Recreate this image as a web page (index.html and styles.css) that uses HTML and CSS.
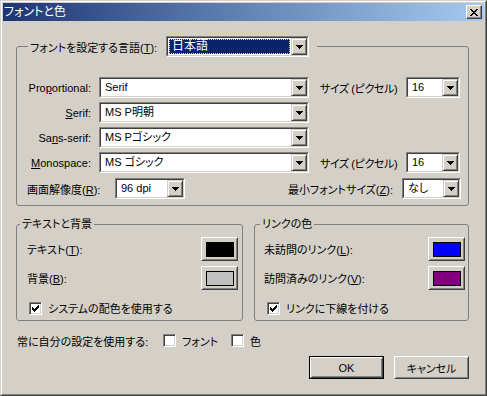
FILE: index.html
```html
<!DOCTYPE html>
<html lang="ja">
<head>
<meta charset="utf-8">
<title>フォントと色</title>
<link rel="stylesheet" href="styles.css">
</head>
<body>
<div class="win">
 <div class="win-in">
  <div class="titlebar">
   <span class="title">フォントと色</span>
   <span class="close"><svg width="8" height="7" shape-rendering="crispEdges"><path d="M0 0h2v1h-2zM6 0h2v1h-2zM1 1h2v1h-2zM5 1h2v1h-2zM2 2h4v1h-4zM3 3h2v1h-2zM2 4h4v1h-4zM1 5h2v1h-2zM5 5h2v1h-2zM0 6h2v1h-2zM6 6h2v1h-2z"/></svg></span>
  </div>
  <div class="body">
   <fieldset class="grp grp-main">
    <legend class="lg-main">
     <span class="lg-label">フォントを設定する言語(<u>T</u>):</span>
     <div class="combo w143">
      <div class="combo-in">
       <span class="cv sel"><span class="selbox">日本語</span></span>
       <span class="dd"><svg width="7" height="4" shape-rendering="crispEdges"><path d="M0 0h7v1h-1v1h-1v1h-1v1h-1v-1h-1v-1h-1v-1h-1z"/></svg></span>
      </div>
     </div>
    </legend>
    <div class="fontgrid">
     <span class="flabel">Pro<u>p</u>ortional:</span>
     <div class="combo w210"><div class="combo-in"><span class="cv">Serif</span><span class="dd"><svg width="7" height="4" shape-rendering="crispEdges"><path d="M0 0h7v1h-1v1h-1v1h-1v1h-1v-1h-1v-1h-1v-1h-1z"/></svg></span></div></div>
     <span class="slabel">サイズ (ピクセル)</span>
     <div class="combo w54"><div class="combo-in"><span class="cv">16</span><span class="dd"><svg width="7" height="4" shape-rendering="crispEdges"><path d="M0 0h7v1h-1v1h-1v1h-1v1h-1v-1h-1v-1h-1v-1h-1z"/></svg></span></div></div>

     <span class="flabel"><u>S</u>erif:</span>
     <div class="combo w210"><div class="combo-in"><span class="cv">MS P明朝</span><span class="dd"><svg width="7" height="4" shape-rendering="crispEdges"><path d="M0 0h7v1h-1v1h-1v1h-1v1h-1v-1h-1v-1h-1v-1h-1z"/></svg></span></div></div>
     <span class="empty"></span>
     <span class="empty"></span>

     <span class="flabel">Sa<u>n</u>s-serif:</span>
     <div class="combo w210"><div class="combo-in"><span class="cv">MS Pゴシック</span><span class="dd"><svg width="7" height="4" shape-rendering="crispEdges"><path d="M0 0h7v1h-1v1h-1v1h-1v1h-1v-1h-1v-1h-1v-1h-1z"/></svg></span></div></div>
     <span class="empty"></span>
     <span class="empty"></span>

     <span class="flabel"><u>M</u>onospace:</span>
     <div class="combo w210"><div class="combo-in"><span class="cv">MS ゴシック</span><span class="dd"><svg width="7" height="4" shape-rendering="crispEdges"><path d="M0 0h7v1h-1v1h-1v1h-1v1h-1v-1h-1v-1h-1v-1h-1z"/></svg></span></div></div>
     <span class="slabel">サイズ (ピクセル)</span>
     <div class="combo w54"><div class="combo-in"><span class="cv">16</span><span class="dd"><svg width="7" height="4" shape-rendering="crispEdges"><path d="M0 0h7v1h-1v1h-1v1h-1v1h-1v-1h-1v-1h-1v-1h-1z"/></svg></span></div></div>
    </div>
    <div class="dpirow">
     <span class="dpilabel">画面解像度(<u>R</u>):</span>
     <div class="combo w70"><div class="combo-in"><span class="cv">96 dpi</span><span class="dd"><svg width="7" height="4" shape-rendering="crispEdges"><path d="M0 0h7v1h-1v1h-1v1h-1v1h-1v-1h-1v-1h-1v-1h-1z"/></svg></span></div></div>
     <span class="spacer"></span>
     <span class="minlabel">最小フォントサイズ(<u>Z</u>):</span>
     <div class="combo w59"><div class="combo-in"><span class="cv">なし</span><span class="dd"><svg width="7" height="4" shape-rendering="crispEdges"><path d="M0 0h7v1h-1v1h-1v1h-1v1h-1v-1h-1v-1h-1v-1h-1z"/></svg></span></div></div>
    </div>
   </fieldset>

   <div class="grprow">
    <fieldset class="grp grp-left">
     <legend class="lg">テキストと背景</legend>
     <div class="crow first">
      <span class="clabel">テキスト(<u>T</u>):</span>
      <span class="cbtn"><span class="sw sw-black"></span></span>
     </div>
     <div class="crow">
      <span class="clabel">背景(<u>B</u>):</span>
      <span class="cbtn"><span class="sw sw-grey"></span></span>
     </div>
     <div class="chkrow">
      <span class="chk"><svg width="7" height="7" shape-rendering="crispEdges"><path d="M6 0h1v1h-1zM5 1h2v1h-2zM0 2h1v1h-1zM4 2h3v1h-3zM0 3h2v1h-2zM3 3h3v1h-3zM0 4h5v1h-5zM1 5h3v1h-3zM2 6h1v1h-1z"/></svg></span>
      <span class="chktext">システムの配色を使用する</span>
     </div>
    </fieldset>
    <fieldset class="grp grp-right">
     <legend class="lg">リンクの色</legend>
     <div class="crow first">
      <span class="clabel">未訪問のリンク(<u>L</u>):</span>
      <span class="cbtn"><span class="sw sw-blue"></span></span>
     </div>
     <div class="crow">
      <span class="clabel">訪問済みのリンク(<u>V</u>):</span>
      <span class="cbtn"><span class="sw sw-purple"></span></span>
     </div>
     <div class="chkrow">
      <span class="chk"><svg width="7" height="7" shape-rendering="crispEdges"><path d="M6 0h1v1h-1zM5 1h2v1h-2zM0 2h1v1h-1zM4 2h3v1h-3zM0 3h2v1h-2zM3 3h3v1h-3zM0 4h5v1h-5zM1 5h3v1h-3zM2 6h1v1h-1z"/></svg></span>
      <span class="chktext">リンクに下線を付ける</span>
     </div>
    </fieldset>
   </div>

   <div class="always">
    <span class="alwayslabel">常に自分の設定を使用する:</span>
    <span class="chk"></span>
    <span class="chktext opt1">フォント</span>
    <span class="chk"></span>
    <span class="chktext">色</span>
   </div>

   <div class="btns">
    <span class="btn btn-default"><span class="btn-in">OK</span></span>
    <span class="btn"><span class="btn-in">キャンセル</span></span>
   </div>
  </div>
 </div>
</div>
</body>
</html>
```

FILE: styles.css
```css
* { box-sizing: border-box; }
html, body { margin: 0; padding: 0; background: #d4d0c8; }
body {
  font-family: "Liberation Sans", "Noto Sans CJK JP", sans-serif;
  font-size: 11px;
  font-feature-settings: "palt" 1;
  color: #000;
  width: 487px;
  height: 396px;
  overflow: hidden;
}
u { text-decoration: underline; text-underline-offset: 1px; }

.win {
  width: 487px;
  height: 396px;
  background: #d4d0c8;
  border: 1px solid;
  border-color: #d4d0c8 #404040 #404040 #d4d0c8;
}
.win-in {
  height: 100%;
  border: 1px solid;
  border-color: #fff #808080 #808080 #fff;
  padding: 1px;
}

.titlebar {
  height: 18px;
  display: flex;
  align-items: center;
  justify-content: space-between;
  padding: 0 2px 0 1px;
  background: linear-gradient(to right, #1c3573 0%, #5574a8 40%, #a6caf0 100%);
}
.title {
  color: #fff;
  font-size: 12px;
  line-height: 18px;
}
.close {
  width: 16px;
  height: 14px;
  display: flex;
  align-items: center;
  justify-content: center;
  background: #d4d0c8;
  border: 1px solid;
  border-color: #fff #404040 #404040 #fff;
  box-shadow: inset -1px -1px #808080;
}

.body {
  padding: 15px 15px 0 13px;
}

/* group boxes */
.grp {
  margin: 0;
  border: 1px solid #808080;
  border-radius: 3px;
  min-width: 0;
}
.grp-main {
  width: 453px;
  padding: 20px 7px 6px 11px;
}
.lg-main {
  display: flex;
  align-items: center;
  padding: 0 8px 0 2px;
  height: 21px;
}
.lg-label {
  width: 136px;
  white-space: nowrap;
}

/* combos */
.combo {
  height: 21px;
  border: 1px solid;
  border-color: #808080 #fff #fff #808080;
  flex: none;
}
.combo-in {
  height: 100%;
  display: flex;
  border: 1px solid;
  border-color: #404040 #d4d0c8 #d4d0c8 #404040;
  background: #fff;
}
.w143 { width: 143px; }
.w210 { width: 210px; }
.w54 { width: 54px; }
.w70 { width: 70px; }
.w59 { width: 59px; }
.cv {
  flex: 1;
  min-width: 0;
  padding-left: 4px;
  line-height: 17px;
  white-space: nowrap;
  overflow: hidden;
}
.cv.sel {
  padding: 1px;
  display: flex;
}
.selbox {
  flex: 1;
  background: #0a246a;
  color: #fff;
  border: 1px dotted #e8dc9c;
  line-height: 13px;
  padding-left: 2px;
  font-size: 12px;
}
.dd {
  width: 16px;
  height: 17px;
  flex: none;
  display: flex;
  align-items: center;
  justify-content: center;
  background: #d4d0c8;
  border: 1px solid;
  border-color: #d4d0c8 #404040 #404040 #d4d0c8;
  box-shadow: inset 1px 1px #fff, inset -1px -1px #808080;
}

/* font grid */
.fontgrid {
  display: grid;
  grid-template-columns: 63px 210px 81px 54px;
  column-gap: 8px;
  row-gap: 4px;
  align-items: center;
}
.flabel {
  text-align: right;
  white-space: nowrap;
}
.slabel {
  white-space: nowrap;
  margin-left: 3px;
  letter-spacing: -0.4px;
}
.empty { height: 21px; }

.dpirow {
  display: flex;
  align-items: center;
  margin-top: 5px;
  margin-left: -1px;
}
.dpilabel {
  width: 88px;
  white-space: nowrap;
}
.spacer { flex: 1; }
.minlabel {
  white-space: nowrap;
  margin-right: 9px;
}

/* colour groups */
.grprow {
  display: flex;
  gap: 11px;
  margin-top: 11px;
  width: 453px;
}
.grp-left {
  width: 227px;
  padding: 0 4px 4px 3px;
}
.grp-right {
  width: 215px;
  padding: 0 3px 4px 5px;
}
.lg {
  padding: 0 2px;
  line-height: 14px;
  white-space: nowrap;
}
.crow {
  display: flex;
  align-items: center;
  justify-content: space-between;
  height: 24px;
  margin-top: 5px;
}
.crow.first { margin-top: 6px; }
.grp-left .crow { padding-left: 7px; }
.grp-right .crow { padding-left: 4px; }
.clabel { white-space: nowrap; }
.cbtn {
  width: 37px;
  height: 24px;
  display: flex;
  align-items: center;
  justify-content: center;
  background: #d4d0c8;
  border: 1px solid;
  border-color: #fff #404040 #404040 #fff;
  box-shadow: inset 1px 1px #d4d0c8, inset -1px -1px #808080;
}
.sw {
  width: 28px;
  height: 15px;
  border: 1px solid #000;
}
.sw-black { background: #000; }
.sw-grey { background: #c0c0c0; }
.sw-blue { background: #0000ff; }
.sw-purple { background: #800080; }

.chkrow {
  display: flex;
  align-items: center;
  height: 16px;
  margin-top: 10px;
}
.grp-left .chkrow { padding-left: 9px; }
.grp-right .chkrow { padding-left: 7px; }
.chk {
  width: 13px;
  height: 13px;
  flex: none;
  display: flex;
  align-items: center;
  justify-content: center;
  background: #fff;
  border: 1px solid;
  border-color: #808080 #fff #fff #808080;
  box-shadow: inset 1px 1px #404040, inset -1px -1px #d4d0c8;
}
.chktext {
  margin-left: 6px;
  white-space: nowrap;
}

/* bottom */
.always {
  display: flex;
  align-items: center;
  height: 13px;
  margin-top: 13px;
  padding-left: 1px;
}
.alwayslabel {
  width: 146px;
  white-space: nowrap;
}
.opt1 { width: 49px; }

.btns {
  display: flex;
  justify-content: flex-end;
  gap: 10px;
  margin-top: 9px;
  width: 453px;
}
.btn {
  width: 75px;
  height: 23px;
  display: flex;
  background: #d4d0c8;
}
.btn-in {
  flex: 1;
  display: flex;
  align-items: center;
  justify-content: center;
  border: 1px solid;
  border-color: #fff #404040 #404040 #fff;
  box-shadow: inset 1px 1px #d4d0c8, inset -1px -1px #808080;
}
.btn-default {
  border: 1px solid #000;
}
```
